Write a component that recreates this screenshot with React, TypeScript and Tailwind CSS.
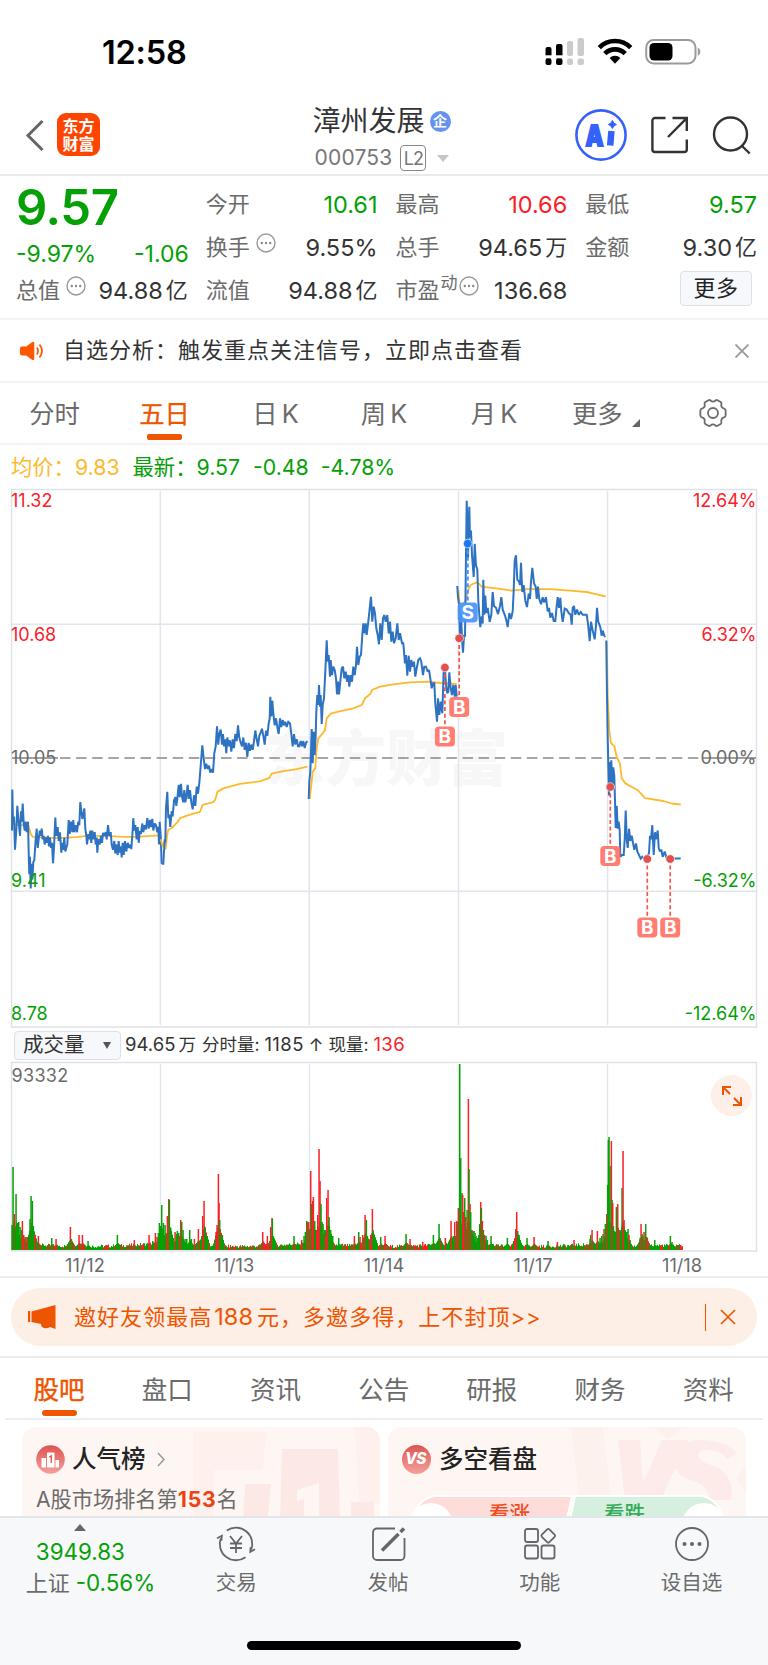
import type { ReactNode } from 'react';

type Series = {
  ox: number;
  sy: number;
  price: string;
  average: string;
};

// Five trading sessions. Samples are taken at 3x horizontally, sy is the vertical sampling rate.
const sessions: Series[] = [
  {
    ox: 0,
    sy: 2.851,
    price:
      '36,985 37,868 39,960 42,945 45,1040 49,985 52,915 55,950 60,1000 63,930 65,960 68,908 71,965 74,985 77,960 80,990 84,960 86,1050 88,1110 90,1060 92,1150 95,1080 97,1125 100,1075 103,1070 107,1010 110,980 113,1035 116,1010 119,985 122,1000 125,980 128,1010 131,1000 134,1025 138,1005 141,1020 144,1000 147,1030 150,1005 153,1035 156,1020 159,1078 162,1035 166,948 169,1000 173,975 176,1015 180,990 184,1048 187,1020 190,1040 193,1005 196,1045 199,1035 202,1025 206,955 209,995 213,960 217,990 220,955 223,990 227,970 231,990 235,960 238,970 241,904 244,930 247,952 250,940 253,922 256,980 259,1000 261,1025 265,995 268,1010 271,985 274,1020 277,985 280,1010 284,990 287,1025 290,1005 292,1048 295,1010 299,1025 303,1000 306,1020 309,992 313,1000 317,990 320,1010 324,970 328,1000 332,990 335,1025 339,1040 343,1015 346,1050 349,1025 353,1055 356,1015 359,1048 362,1030 365,1062 368,1020 371,1055 375,1015 379,1045 383,1020 387,1035 391,1025 394,1038 397,1000 400,950 403,985 406,970 410,1010 413,975 416,1020 419,990 423,992 427,965 430,990 434,970 438,982 442,950 446,980 450,955 453,975 457,952 460,985 464,965 468,970 472,990 475,975 477,1025 479,960 482,1000 485,1080',
    average:
      '36,985 40,960 48,970 85,970 92,995 98,1003 170,1007 230,1004 260,1000 320,1000 370,1003 410,1003 477,999',
  },
  {
    ox: 0,
    sy: 2.851,
    price:
      '485,1080 490,1080 494,1010 496,1020 498,920 502,875 505,950 508,940 511,975 515,930 518,945 522,900 526,890 529,915 532,895 536,855 539,890 543,852 546,888 550,905 553,870 556,905 559,890 563,855 566,895 570,870 574,905 578,925 582,885 586,915 590,860 594,880 598,850 602,800 607,742 611,780 615,810 619,795 623,810 627,800 631,820 635,810 639,820 643,765 647,745 651,688 655,740 658,710 662,697 666,740 669,710 672,745 676,725 679,765 682,720 686,745 690,728 694,760 698,725 702,750 706,710 710,730 714,685 718,720 722,735 726,745 730,720 734,755 738,735 742,775 746,735 750,758 754,740 758,755 762,730 766,700 770,725 774,745 778,715 782,705 786,695 790,715 794,740 798,700 802,715 806,680 809,665 811,604 814,660 817,615 820,650 824,685 828,665 832,690 836,710 840,665 844,690 848,670 852,685 856,675 860,690 865,675 870,680 874,710 878,745 882,710 886,740 890,725 894,745 898,745 902,730 906,745 910,730 914,750 918,735 922,730',
    average:
      '482,1010 488,1030 492,1020 497,1037 501,1000 505,983 515,978 532,962 540,950 570,940 600,932 608,912 640,904 646,897 652,875 670,865 720,852 780,845 808,835 815,823 850,816 890,810 922,803',
  },
  {
    ox: 900,
    sy: 3,
    price:
      '26,942 28,890 31,860 33,800 35,732 38,835 41,740 44,810 47,750 49,680 52,630 55,660 57,600 60,665 62,630 65,717 68,660 72,640 76,560 80,466 83,530 86,510 90,575 92,525 96,570 100,545 104,555 108,580 111,628 114,590 117,628 121,590 125,550 129,545 133,580 137,560 141,590 145,570 148,605 152,570 156,590 160,545 164,570 168,540 171,485 175,540 179,515 183,510 187,450 190,415 194,445 197,415 200,450 205,410 209,370 213,335 217,410 221,365 225,385 229,430 233,450 237,478 241,415 245,465 249,400 253,390 257,410 262,390 266,445 270,410 274,470 278,440 282,475 287,460 292,415 296,465 300,445 306,475 310,475 315,535 318,510 322,572 326,512 330,560 334,525 338,545 342,530 346,575 350,550 355,525 360,520 364,530 369,570 373,545 378,545 383,560 387,555 391,580 395,610 399,595 403,595 406,655 411,710 414,640 418,690 422,650 427,685 429,620 431,555 435,555 438,600 442,625 445,620 448,562 452,610 456,630 460,600 464,635 467,600 470,635',
    average:
      '29,942 33,910 38,860 46,850 49,800 55,760 68,745 75,735 80,700 92,686 115,680 160,670 185,660 195,640 210,628 216,615 240,605 280,598 330,592 385,590 420,594 470,597',
  },
  {
    ox: 1320,
    sy: 2.851,
    price:
      '52,288 54,320 57,340 60,440 63,365 66,440 69,478 72,430 75,430 78,200 80,45 82,100 84,208 88,62 90,150 93,130 96,200 101,262 104,168 108,230 112,240 115,330 118,370 121,405 125,375 128,395 130,270 133,370 136,315 139,365 143,350 149,390 154,370 158,305 162,345 168,350 174,368 180,345 184,320 188,355 194,370 199,385 203,405 208,365 213,382 218,360 221,300 224,215 228,200 232,270 237,275 240,285 243,222 247,305 251,285 256,330 261,348 266,310 270,325 273,275 277,236 282,280 287,290 290,325 294,290 298,325 303,340 308,320 313,335 318,320 323,360 327,350 331,378 336,365 341,388 346,388 350,345 353,320 357,350 361,322 364,360 368,390 374,352 380,355 386,365 392,370 395,398 398,350 402,345 406,370 411,355 416,370 422,362 428,370 434,370 440,370 444,395 449,445 453,390 458,415 464,440 468,400 471,350 475,390 481,405 485,430 488,415 493,430 496,433',
    average:
      '55,300 60,350 78,330 84,300 92,285 112,277 125,290 180,296 215,301 260,297 330,297 400,302 440,305 470,312 497,318',
  },
  {
    ox: 1320,
    sy: 2.851,
    price:
      '499,443 501,600 503,720 505,800 507,885 510,790 512,870 514,785 517,870 520,805 523,830 525,900 527,978 530,915 533,980 536,960 539,985 541,1060 546,1055 551,1055 554,1010 557,928 560,1010 563,1035 567,980 571,1015 575,1000 579,1020 583,1040 588,1022 592,1045 597,1055 602,1065 607,1060 612,1065 622,1060 627,1050 630,1000 633,1010 637,970 641,1055 645,990 648,1010 653,985 656,1035 660,1045 664,1040 668,1060 674,1045 680,1065 722,1065',
    average:
      '500,450 503,600 508,700 513,735 523,745 530,775 540,795 545,835 555,850 593,870 615,893 670,901 695,908 722,911',
  },
];

const plot = (data: string, s: Series) =>
  data
    .split(' ')
    .map((pair) => {
      const [x, y] = pair.split(',').map(Number);
      return `${((x + s.ox) / 3).toFixed(1)},${(y / s.sy).toFixed(1)}`;
    })
    .join(' ');

const trades = [
  { side: 'S', x: 467.7, dot: 58.6, box: 127.5 },
  { side: 'B', x: 444.9, dot: 182.5, box: 251.5 },
  { side: 'B', x: 459.2, dot: 153.3, box: 222 },
  { side: 'B', x: 610.3, dot: 302, box: 371 },
  { side: 'B', x: 647.3, dot: 374, box: 442.6 },
  { side: 'B', x: 670.2, dot: 374, box: 442.6 },
];

const axis = [
  { y: 22, left: '11.32', right: '12.64%', color: '#fb2028' },
  { y: 156, left: '10.68', right: '6.32%', color: '#fb2028' },
  { y: 279, left: '10.05', right: '0.00%', color: '#6b6b6b' },
  { y: 401.5, left: '9.41', right: '-6.32%', color: '#05a005' },
  { y: 535, left: '8.78', right: '-12.64%', color: '#05a005' },
];

// x at 3x, height in px, r = up / g = down
const spikes =
  '36g25 39g83 43r36 45g22 48g56 52g27 56g28 60g23 64g20 67r29 71r15 75r13 78g13 82r13 86g10 90g31 93g54 97g49 100g24 104r14 108g10 115r14 155g12 168r11 211r23 214g11 237r15 247r15 264g9 352g15 403r10 447r15 458g9 466r17 471r13 475g17 478g27 482g24 485g45 488g20 490g27 495g25 498g17 502r34 506r51 508g50 512g22 516g15 520g12 525r18 529g16 532g19 536g17 539r14 542r30 545g28 549g20 555g11 560g11 569g20 574g11 583r11 595r21 605g12 608r34 612r49 615g23 620g14 648r18 651r25 655r76 657r47 659g30 662g14 667g15 788r18 802r14 812r23 816r32 817g31 822g10 882g14 905r10 912g14 916g18 920g29 923r28 926r28 929g20 932r79 935g46 938r49 940r53 944g29 947g20 950r20 953r35 957r101 960r69 963g46 966g28 969g26 974g20 977r15 980r52 984r60 987g33 992g20 998g14 1016g12 1063r14 1076g18 1080r13 1088r15 1092g10 1095r35 1099g30 1102g14 1112r15 1117r41 1119g20 1124g10 1142g13 1155r14 1218g16 1230r11 1268r8 1300g15 1317g26 1320g12 1336r12 1353r29 1360g14 1364r28 1367g14 1370r29 1373g28 1375r42 1379g186 1382g92 1386g57 1388r55 1391r38 1394g52 1397r33 1401g40 1403r28 1405r151 1407g81 1410r46 1412g38 1416r20 1419g19 1422g19 1425g17 1428g14 1432g12 1436g10 1439g26 1442r48 1444g42 1447r29 1450g20 1454r15 1458g14 1462g10 1473g14 1522g12 1547r21 1550r38 1553g19 1557g15 1581g12 1602r13 1644g9 1672r8 1722r10 1770g11 1772g15 1776r20 1792r19 1800g12 1805g14 1809g16 1812r21 1816g26 1820r36 1823g65 1825g110 1827g113 1830g84 1834r109 1836g50 1838r47 1840g24 1844g17 1847g18 1849g43 1853r46 1856g18 1858r20 1862g19 1866g62 1869r99 1872r30 1874g20 1876g17 1880g18 1884g21 1887r15 1890g10 1920g12 1923r26 1926g16 1929g14 1932r18 1937g26 1940g13 1942r12 1964g10 2011g14 2016g8 2033r5 2042r5';

const noise = (i: number) => {
  const v = Math.sin(i * 12.9898) * 43758.5453;
  return v - Math.floor(v);
};

const spikeBars = spikes.split(' ').map((s) => {
  const up = s.includes('r');
  const [x, h] = s.split(up ? 'r' : 'g').map(Number);
  return { x: x / 3, h, up };
});

// shoulder of the tallest neighbouring spike
const shoulder = (x: number) =>
  spikeBars.reduce((top, b) => {
    const d = Math.abs(b.x - x);
    return d < 7 ? Math.max(top, Math.min(b.h, 55) * 0.5 * (1 - d / 7)) : top;
  }, 0);

const quietBars = Array.from({ length: 671 }, (_, i) => {
  const x = 12 + i;
  // trading thins out in the middle of a session
  const edge = Math.abs(((i % 149) - 74) / 74);
  const swell = i > 596 ? 1 : edge * edge * 3.5;
  const side = shoulder(x);
  return { x, h: Math.max(2 + noise(i) * 3.4 + swell, side), up: noise(i + 700) > (side > 8 ? 0.8 : 0.62) };
});

const Dots = () => (
  <svg className="size-5 shrink-0" viewBox="0 0 20 20" fill="none">
    <circle cx="10" cy="10" r="9" stroke="#999" strokeWidth="1.4" />
    <g fill="#888">
      <circle cx="5.8" cy="10" r="1.2" />
      <circle cx="10" cy="10" r="1.2" />
      <circle cx="14.2" cy="10" r="1.2" />
    </g>
  </svg>
);

const StatusBar = () => (
  <div className="flex h-[95px] items-start justify-between pl-[102px] pr-[67px]">
    <span className="mt-[33px] text-[32.5px] leading-[40px] font-semibold tracking-[-0.2px] text-black">12:58</span>
    <svg className="mt-[36px] h-[32px] w-[156px]" viewBox="0 0 156 32">
      <g fill="#000">
        <rect x="0.5" y="11" width="6" height="12" rx="2" />
        <rect x="11" y="8" width="6.5" height="15" rx="2" />
        <rect x="0.5" y="22.5" width="6" height="6.5" rx="2" />
        <rect x="11" y="22.5" width="6.5" height="6.5" rx="2" />
      </g>
      <path d="M0 20.8h18" stroke="#fff" strokeWidth="3" />
      <g fill="#cbcbcb">
        <rect x="22" y="5" width="6" height="15" rx="2" />
        <rect x="32.5" y="2" width="6.5" height="18" rx="2" />
        <rect x="22" y="22.5" width="6" height="6.5" rx="2" />
        <rect x="32.5" y="22.5" width="6.5" height="6.5" rx="2" />
      </g>
      <g fill="none" stroke="#000" strokeWidth="4.6">
        <path d="M54.3 11.6a22 22 0 0 1 31.4 0" />
        <path d="M59.8 17.6a14.4 14.4 0 0 1 20.4 0" />
      </g>
      <path d="M70 27.8l-5.4-5.8a7.8 7.8 0 0 1 10.8 0z" fill="#000" />
      <rect x="101.2" y="4" width="49.3" height="23.5" rx="7.5" fill="none" stroke="#9b9b9b" strokeWidth="2" />
      <rect x="104.5" y="7" width="23" height="17.5" rx="4.5" fill="#000" />
      <path d="M152.8 11.5q2.6 1.2 2.6 4.2t-2.6 4.2z" fill="#9b9b9b" />
    </svg>
  </div>
);

const Header = () => (
  <header className="flex h-[81px] justify-between border-b-2 border-[#e9e9ea] pr-[16px] pl-[25px]">
    <div className="flex w-[240px] items-start">
      <svg className="mt-[25px] h-[31px] w-5" viewBox="0 0 20 31" fill="none">
        <path d="M17.5 1L3 15.5L17.5 30" stroke="#666" strokeWidth="3" />
      </svg>
      <div className="mt-[18px] ml-3 flex size-[43px] flex-col items-center justify-center rounded-[9px] bg-[#ff4400] text-[16px] leading-[18px] font-bold text-white">
        <span>东方</span>
        <span>财富</span>
      </div>
    </div>
    <div className="flex w-[180px] flex-col items-start pl-[15px]">
      <div className="ml-[-1px] flex h-[49px] items-center gap-[5px] pt-[3px]">
        <h1 className="text-[28px] leading-[46px] text-[#333]">漳州发展</h1>
        <span className="flex size-[21px] items-center justify-center rounded-full bg-[#6592ee] text-[14px] leading-none font-bold text-white">
          企
        </span>
      </div>
      <div className="flex h-[28px] items-center pl-px text-[21px] text-[#777]">
        <span className="tracking-[0.2px]">000753</span>
        <span className="ml-2 flex h-[26px] w-[26px] items-center justify-center rounded-[4px] border-[1.5px] border-[#888] text-[18px] tracking-[-0.8px]">
          L2
        </span>
        <svg className="ml-[11px] h-[7px] w-3" viewBox="0 0 12 7">
          <path d="M0 0h12L6 7z" fill="#c6c6c6" />
        </svg>
      </div>
    </div>
    <div className="flex w-[240px] items-start justify-end">
      <svg className="mt-[14px] size-[52px]" viewBox="0 0 52 52" fill="none">
        <circle cx="26" cy="26" r="24.6" stroke="#3561fb" strokeWidth="2.6" />
        <text x="10.5" y="36.5" className="text-[28px] font-black" textLength="18" lengthAdjust="spacingAndGlyphs" fill="#3561fb" stroke="#3561fb" strokeWidth="1.8">
          A
        </text>
        <path d="M36.4 22l-1.200 14.500" stroke="#3561fb" strokeWidth="6.500" />
        <path d="M37.4 11.5q1 3 4 4q-3 1-4 4q-1-3-4-4q3-1 4-4z" fill="#3561fb" stroke="#3561fb" />
      </svg>
      <svg className="mt-[20px] ml-[23px] size-[40px]" viewBox="0 0 40 40" fill="none" stroke="#333" strokeWidth="2.4">
        <path d="M15.5 3H5a2.6 2.6 0 0 0-2.6 2.6v28.8A2.6 2.6 0 0 0 5 37h29.2a2.6 2.6 0 0 0 2.6-2.6V24.5" />
        <path d="M22.5 3h14.3v13M36.5 3.3L18 22" />
      </svg>
      <svg className="mt-[20px] ml-[21px] size-[41px]" viewBox="0 0 41 41" fill="none" stroke="#333" strokeWidth="2.4">
        <circle cx="19.5" cy="19" r="16.5" />
        <path d="M30.5 30.5l8.2 8" />
      </svg>
    </div>
  </header>
);

type StatProps = {
  label: string;
  value?: string;
  unit?: string;
  color?: string;
  info?: boolean;
  sup?: string;
};

const Stat = ({ label, value, unit, color = 'text-[#333]', info, sup }: StatProps) => (
  <div className="flex h-[43px] items-center justify-between whitespace-nowrap">
    <div className="flex items-center text-[22px] text-[#6b6b6b]">
      {label}
      {sup && <span className="mb-[14px] ml-px text-[17px] leading-none">{sup}</span>}
      {info && (
        <span className={sup ? 'mb-[10px] ml-px' : 'mb-[10px] ml-1.5'}>
          <Dots />
        </span>
      )}
    </div>
    <div className={`flex items-center text-[23.5px] ${color}`}>
      {value}
      {unit && <span className="ml-[3px] text-[22px]">{unit}</span>}
    </div>
  </div>
);

const Quote = () => (
  <section className="grid h-[144px] grid-cols-4 gap-[18px] border-b-2 border-[#f4f4f5] pt-[7px] pr-[11px] pl-4">
    <div>
      <div className="h-[49px] text-[49px] leading-[50px] font-semibold tracking-[-0.4px] text-[#05a005]">9.57</div>
      <div className="mr-[-1px] flex h-[37px] items-center justify-between pt-[7px] text-[23px] text-[#05a005]">
        <span>-9.97%</span>
        <span>-1.06</span>
      </div>
      <Stat label="总值" value="94.88" unit="亿" info />
    </div>
    <div>
      <Stat label="今开" value="10.61" color="text-[#05a005]" />
      <Stat label="换手" value="9.55%" info />
      <Stat label="流值" value="94.88" unit="亿" />
    </div>
    <div>
      <Stat label="最高" value="10.66" color="text-[#fb2028]" />
      <Stat label="总手" value="94.65" unit="万" />
      <Stat label="市盈" value="136.68" sup="动" info />
    </div>
    <div>
      <Stat label="最低" value="9.57" color="text-[#05a005]" />
      <Stat label="金额" value="9.30" unit="亿" />
      <button className="mt-[2px] mr-[5px] ml-auto flex h-[35px] w-[72px] items-center justify-center rounded-[4px] border-[1.5px] border-[#dde0e7] bg-[#f6f8fb] text-[22px] tracking-[0.5px] text-[#222]">
        更多
      </button>
    </div>
  </section>
);

const Notice = () => (
  <section className="flex h-[63px] items-center border-b-2 border-[#f4f4f5] pr-[19px] pl-5">
    <svg className="h-5 w-[25px]" viewBox="0 0 25 20" fill="none">
      <path
        d="M2 5.5h4.2L12 1.2q2.3-1.3 2.3 1v15.6q0 2.3-2.3 1L6.2 14.5H2q-2 0-2-2v-5q0-2 2-2z"
        fill="#ff5500"
      />
      <path d="M16.8 6.5q2.6 3.500 0 7M19.5 3.500q5 6.500 0 13" stroke="#ff5500" strokeWidth="1.7" />
    </svg>
    <span className="ml-[18px] text-[22px] tracking-[1px] text-[#333]">自选分析：触发重点关注信号，立即点击查看</span>
    <svg className="ml-auto size-[14px]" viewBox="0 0 14 14" stroke="#999" strokeWidth="1.8">
      <path d="M.5.5l13 13M13.500.5l-13 13" />
    </svg>
  </section>
);

const periods = [
  { name: '分时', w: 'w-[109px]' },
  { name: '五日', w: 'w-[111px]', active: true },
  { name: '日 K', w: 'w-[111px]' },
  { name: '周 K', w: 'w-[106px]' },
  { name: '月 K', w: 'w-[114px]' },
];

const PeriodTabs = () => (
  <nav className="flex h-[62px] items-center border-b-2 border-[#f4f4f5]">
    {periods.map((p) => (
      <a
        key={p.name}
        className={`relative flex h-full items-center justify-center pt-px text-[25.300px] [word-spacing:-3px] ${p.w} ${p.active ? 'text-[#ee5500] [-webkit-text-stroke:0.3px_#ee5500]' : 'text-[#6b6b6b]'}`}
      >
        {p.name}
        {p.active && <i className="absolute bottom-[3px] h-[6px] w-[35px] rounded-[2px] bg-[#ee5500]" />}
      </a>
    ))}
    <a className="ml-[21px] flex items-center pt-px text-[25.300px] text-[#6b6b6b]">
      更多
      <svg className="mt-[18px] ml-[9px] size-2" viewBox="0 0 8 8">
        <path d="M8 0v8H0z" fill="#666" />
      </svg>
    </a>
    <svg className="mb-px ml-[58px] size-[30px]" viewBox="0 0 30 30" fill="none" stroke="#6b6b6b" strokeWidth="1.8">
      <path
        d="M10.500 2.200q1.200-.6 2 .3q2.500 2.300 5 0q.8-.9 2-.3l3.200 1.900q1 .7.700 1.900q-.8 3.600 2.700 4.600q1.400.4 1.500 1.700v5.400q-.1 1.300-1.500 1.700q-3.500 1-2.700 4.600q.3 1.200-.7 1.900l-3.200 1.900q-1.200.6-2-.3q-2.500-2.300-5 0q-.8.900-2 .3l-3.200-1.900q-1-.7-.7-1.900q.8-3.600-2.700-4.600q-1.400-.4-1.500-1.700v-5.400q.1-1.300 1.500-1.700q3.500-1 2.700-4.600q-.3-1.200.7-1.900z"
      />
      <circle cx="15" cy="15" r="5" />
    </svg>
  </nav>
);

const PriceChart = () => (
  <svg className="block h-[544px] w-full" viewBox="0 0 768 544" fill="none">
    <text x="264" y="296" className="text-[61px] font-black" fill="#f7f7f7">
      东方财富
    </text>
    <g stroke="#e2e5ee" strokeWidth="1.5">
      <path d="M11.500 139.300H756M11.500 406.200H756M160.300 6V540M309.300 6V540M458.500 6V540M607.600 6V540" />
      <path d="M11.500 4.500V542H756.500V4.500z" stroke="#dfe1e6" strokeWidth="1.5" />
    </g>
    <path d="M12 273H58" stroke="#808080" strokeWidth="1.6" />
    <path d="M60 273H702" stroke="#888" strokeWidth="1.7" strokeDasharray="10.500 5.600" />
    <path d="M702 273H756" stroke="#808080" strokeWidth="1.6" />
    {sessions.map((s, i) => (
      <g key={i} strokeLinejoin="round">
        <polyline points={plot(s.average, s)} stroke="#fdb92e" strokeWidth="1.8" />
        <polyline points={plot(s.price, s)} stroke="#2e73c1" strokeWidth="2" strokeLinejoin="miter" strokeMiterlimit="2" />
      </g>
    ))}
    {axis.map((a) => (
      <g key={a.left} fill={a.color} className="text-[18px]">
        <text x="11" y={a.y}>
          {a.left}
        </text>
        <text x="756.500" y={a.y} textAnchor="end">
          {a.right}
        </text>
      </g>
    ))}
    {trades.map((t, i) => {
      const buy = t.side === 'B';
      return (
        <g key={i}>
          <path
            d={`M${t.x} ${t.dot}V${t.box - 9}`}
            stroke={buy ? '#f2564a' : '#4a93fb'}
            strokeWidth={buy ? 1.7 : 2.2}
            strokeDasharray="4 2.600"
          />
          <circle cx={t.x} cy={t.dot} r="4.300" fill={buy ? '#e2504c' : '#1d78f2'} stroke="#fff" strokeOpacity=".6" />
          <rect x={t.x - 10} y={t.box - 10} width="20" height="20" rx="4" fill={buy ? '#ff7466' : '#4a93fb'} fillOpacity=".93" />
          <text x={t.x} y={t.box + 6.800} textAnchor="middle" className="text-[19px] font-bold" fill="#fff">
            {t.side}
          </text>
        </g>
      );
    })}
  </svg>
);

const VolumeHeader = () => (
  <div className="flex h-[32px] items-center pl-[14px] text-[17.500px] text-[#333]">
    <button className="flex h-[29px] w-[107px] items-center justify-between rounded-[4px] border-[1.500px] border-[#dde0e7] bg-[#f6f8fb] pr-[9px] pl-[8px] text-[20.500px]">
      成交量
      <svg className="h-[7px] w-2" viewBox="0 0 8 7">
        <path d="M0 0h8L4 7z" fill="#555" />
      </svg>
    </button>
    <span className="ml-1 flex items-center gap-[3px]">
      <span className="text-[18.500px]">94.65</span>
      <span>万</span>
    </span>
    <span className="ml-[6px] flex items-center gap-[5px]">
      <span>分时量:</span>
      <span className="text-[18.500px] tracking-[0.4px]">1185</span>
      <span>↑</span>
      <span>现量:</span>
      <span className="text-[18.500px] tracking-[0.4px] text-[#fb2028]">136</span>
    </span>
  </div>
);

const VolumeChart = () => (
  <div className="relative h-[191px]">
    <svg className="block h-full w-full" viewBox="0 0 768 191" fill="none">
      <path d="M160.500 3V189M309.500 3V189M458.500 3V189M607.500 3V189" stroke="#e2e5ee" strokeWidth="1.400" />
      <path d="M11.500 1.500V190H756.500V1.500z" stroke="#dfe1e6" strokeWidth="1.500" />
      {quietBars.map((b) => (
        <rect key={b.x} x={b.x} y={189 - b.h} width="1" height={b.h} fill={b.up ? '#fb2028' : '#05a005'} />
      ))}
      {spikeBars.map((b, i) => (
        <rect key={i} x={b.x - 0.7} y={189 - b.h} width="1.500" height={b.h} fill={b.up ? '#fb2028' : '#05a005'} />
      ))}
      <text x="11.500" y="20.500" className="text-[18px] tracking-[0.3px]" fill="#6b6b6b">
        93332
      </text>
    </svg>
    <button className="absolute top-[14px] right-[16px] flex size-[41px] items-center justify-center rounded-full bg-[#fef0e9]">
      <svg className="size-5" viewBox="0 0 20 20" fill="none" stroke="#ee5500" strokeWidth="2">
        <path d="M1 9V1h8M1 1l7 7M19 11v8h-8M19 19l-7-7" />
      </svg>
    </button>
  </div>
);

const days = ['11/12', '11/13', '11/14', '11/17', '11/18'];

const Promo = () => (
  <section className="h-[80px] border-b-2 border-[#ececee] px-[11px] pt-[10px]">
    <div className="flex h-[58px] items-center rounded-[29px] bg-[#fdeee6] pr-[21px] pl-[17px] text-[#ee5500]">
      <svg className="h-[24px] w-[28px]" viewBox="0 0 28 24" fill="#ee5500">
        <path d="M0 6h2.200v11H0zM3.500 6.500L27.500 0v24L22 22q-3 2-6 1t-3-4L3.500 17z" />
      </svg>
      <span className="ml-[18px] flex items-center gap-[2px] text-[22px] tracking-[1.05px]">
        邀好友领最高<span className="text-[23.500px] tracking-normal">188</span>
        <span className="ml-0.5">元，多邀多得，上不封顶&gt;&gt;</span>
      </span>
      <i className="ml-auto h-[27px] w-[1.500px] bg-[#ee5500]" />
      <svg className="ml-[14px] size-4" viewBox="0 0 16 16" stroke="#ee5500" strokeWidth="1.700">
        <path d="M1 1l14 14M15 1L1 15" />
      </svg>
    </div>
  </section>
);

const infoTabs = ['股吧', '盘口', '资讯', '公告', '研报', '财务', '资料'];

const InfoTabs = () => (
  <nav className="mx-[5px] flex h-[62px] border-b-2 border-[#eeeff5]">
    {infoTabs.map((tab, i) => (
      <a
        key={tab}
        className={`relative flex w-[108.2px] shrink-0 items-center justify-center pt-1 text-[25.500px] ${i === 0 ? 'text-[#ee5500] [-webkit-text-stroke:0.4px_#ee5500]' : 'text-[#6b6b6b]'}`}
      >
        {tab}
        {i === 0 && <i className="absolute bottom-[2px] h-[6px] w-[35px] rounded-[3px] bg-[#ee5500]" />}
      </a>
    ))}
  </nav>
);

const Cards = () => (
  <section className="flex h-[96px] gap-2 overflow-hidden pt-[7px] pl-[22px]">
    <div className="relative h-[120px] w-[358px] shrink-0 overflow-hidden rounded-[14px] bg-[#fef6f3] pt-4 pl-[14px]">
      <svg className="absolute inset-0 h-[120px] w-[358px]" viewBox="0 0 358 120">
        <path d="M171 5h73l-3 38h-49v50h-21zM333 0h20q5 6 5 20v56h-21z" fill="#fdf0ed" />
        <path d="M223 57h26l-4 40h-24zM260 22h56l2 75h-60zM329 75h23v20h-23z" fill="#fce8e5" />
        <path d="M275 63l22-7v40h-15V72l-7 2z" fill="#fef6f3" />
      </svg>
      <div className="relative flex h-8 items-center">
        <svg className="size-[29px]" viewBox="0 0 29 29">
          <defs>
            <linearGradient id="rank" x2="0" y2="1">
              <stop stopColor="#de5350" />
              <stop offset="1" stopColor="#f4a09c" />
            </linearGradient>
          </defs>
          <circle cx="14.500" cy="14.500" r="14.300" fill="url(#rank)" />
          <path d="M5.500 13h4.500v9.500H5.500zM11 7.500h7.500v15H11zM19.500 15H23v7.500h-3.500z" fill="#fff" />
          <path d="M13.300 12l2-1v7" stroke="#de6460" strokeWidth="1.500" fill="none" />
        </svg>
        <h2 className="ml-[7px] text-[24.500px] font-medium text-[#222]">人气榜</h2>
        <svg className="ml-[11px] h-[15px] w-2" viewBox="0 0 8 15" fill="none">
          <path d="M1 1l6 6.500L1 14" stroke="#999" strokeWidth="1.500" />
        </svg>
      </div>
      <p className="relative mt-[9px] text-[21.200px] leading-[30px] text-[#6b6b6b]">
        A股市场排名第<b className="tracking-[0.8px] text-[#ec4310]">153</b>名
      </p>
    </div>
    <div className="relative h-[120px] w-[358px] shrink-0 overflow-hidden rounded-[14px] bg-[#fef6f3] pt-4 pl-[14px]">
      <svg className="absolute inset-0 h-[120px] w-[358px]" viewBox="0 0 358 120" fill="#fcebe8">
        <path d="M183 0h32l8 70h-32zM265 0h30l-14 12zM358 38v28l-10-14z" fill="#fdf1ee" />
        <path d="M230 13h22l3 43l19-43h26l-27 60h-36z" />
        <path d="M349 26q-12-12-34-13q-29 0-29 22q0 12 17 18q20 7 18 20h22q5-26-20-35q-14-5-13-10q2-7 17-4q8 2 12 8z" />
      </svg>
      <div className="relative flex h-8 items-center">
        <span className="flex size-[29px] items-center justify-center rounded-full bg-linear-to-b from-[#de5350] to-[#f4a09c] pr-0.5 text-[15.500px] font-extrabold tracking-[-0.5px] text-white italic">
          VS
        </span>
        <h2 className="ml-2 text-[24.500px] font-medium text-[#222]">多空看盘</h2>
      </div>
      <svg className="absolute top-[68px] left-[16px] h-[52px] w-[328px]" viewBox="0 0 328 52">
        <path d="M30 1H168L157 52H30A26 26 0 0 1 30 1z" fill="#fddcd9" stroke="#fff" strokeWidth="2" />
        <path d="M171 1H298A26 26 0 0 1 298 52H160z" fill="#d6efde" stroke="#fff" strokeWidth="2" />
        <circle cx="27" cy="30" r="22" fill="#fff" />
        <circle cx="300" cy="30" r="22" fill="#fff" />
        <text x="85" y="25.500" className="text-[20.500px] font-medium" fill="#ec4e25">
          看涨
        </text>
        <text x="200" y="25.500" className="text-[20.500px] font-medium" fill="#33ab58">
          看跌
        </text>
      </svg>
    </div>
  </section>
);

const Action = ({ label, children }: { label: string; children: ReactNode }) => (
  <a className="flex w-[152px] flex-col items-center pt-2 pr-px">
    <svg className="h-[36px] w-[40px]" viewBox="0 0 40 36" fill="none" stroke="#666" strokeWidth="1.800">
      {children}
    </svg>
    <span className="mt-[6px] text-[20.500px] leading-[30px] text-[#6b6b6b]">{label}</span>
  </a>
);

const BottomBar = () => (
  <footer className="relative flex h-[149px] border-t-2 border-[#e4e5e8] bg-[#f7f8fa]">
    <div className="flex w-[161px] flex-col items-center text-[22.400px] text-[#05a005]">
      <svg className="mt-[6px] h-[7px] w-3" viewBox="0 0 12 7">
        <path d="M6 0l6 7H0z" fill="#666" />
      </svg>
      <span className="mt-[5px] leading-[31px]">3949.83</span>
      <span className="flex items-center gap-[6px] pl-5 leading-[32px]">
        <span className="text-[22px] text-[#6b6b6b]">上证</span>-0.56%
      </span>
    </div>
    <Action label="交易">
      <path d="M10.800 4.500A16.300 16.300 0 0 1 35.200 23.800M29.500 31.250A16.300 16.300 0 0 1 4.800 12.200" />
      <path d="M1 12.300l5-2.600-.5 5M39 23.200l-4.800 2.800.3-4.800" strokeWidth="1.600" />
      <path d="M14 10l6 7.500L26 10M20 17.500V27M14 17.500h12M14 22h12" />
    </Action>
    <Action label="发帖">
      <path d="M27 2.500H9a4 4 0 0 0-4 4v23.500a4 4 0 0 0 4 4h23.500a4 4 0 0 0 4-4V12" />
      <path d="M14 24.500L30.500 8M32.500 6L36 2.500" strokeWidth="3.500" />
    </Action>
    <Action label="功能">
      <rect x="5" y="3" width="13" height="13" rx="2" />
      <rect x="5" y="19.500" width="13" height="13" rx="2" />
      <rect x="21.500" y="19.500" width="13" height="13" rx="2" />
      <rect x="23" y="4.500" width="10.500" height="10.500" rx="1.500" transform="rotate(45 28.250 9.750)" />
    </Action>
    <Action label="设自选">
      <circle cx="20" cy="18" r="16" />
      <g fill="#666" stroke="none">
        <circle cx="12.500" cy="18" r="2" />
        <circle cx="20" cy="18" r="2" />
        <circle cx="27.500" cy="18" r="2" />
      </g>
    </Action>
    <i className="absolute bottom-[15px] left-[247px] h-[9px] w-[274px] rounded-full bg-black" />
  </footer>
);

const App = () => (
  <main className="h-[1665px] w-[768px] overflow-hidden bg-white font-['Inter','Noto_Sans_CJK_SC',sans-serif]">
    <StatusBar />
    <Header />
    <Quote />
    <Notice />
    <PeriodTabs />
    <div className="flex h-[40px] items-center pt-[5px] pl-[11px] text-[21.300px] text-[#05a005]">
      <span className="text-[#fdb92e]">均价：</span>
      <span className="text-[#fdb92e]">9.83</span>
      <span className="ml-[13px]">最新：</span>
      <span>9.57</span>
      <span className="ml-[13px]">-0.48</span>
      <span className="ml-[12px]">-4.78%</span>
    </div>
    <PriceChart />
    <VolumeHeader />
    <VolumeChart />
    <div className="flex h-[26px] justify-between border-b-2 border-[#ededf0] pt-[3px] pr-[66px] pl-[65px] text-[18.200px] leading-[20px] text-[#6b6b6b]">
      {days.map((d) => (
        <span key={d}>{d}</span>
      ))}
    </div>
    <Promo />
    <InfoTabs />
    <Cards />
    <BottomBar />
  </main>
);

export default App;
